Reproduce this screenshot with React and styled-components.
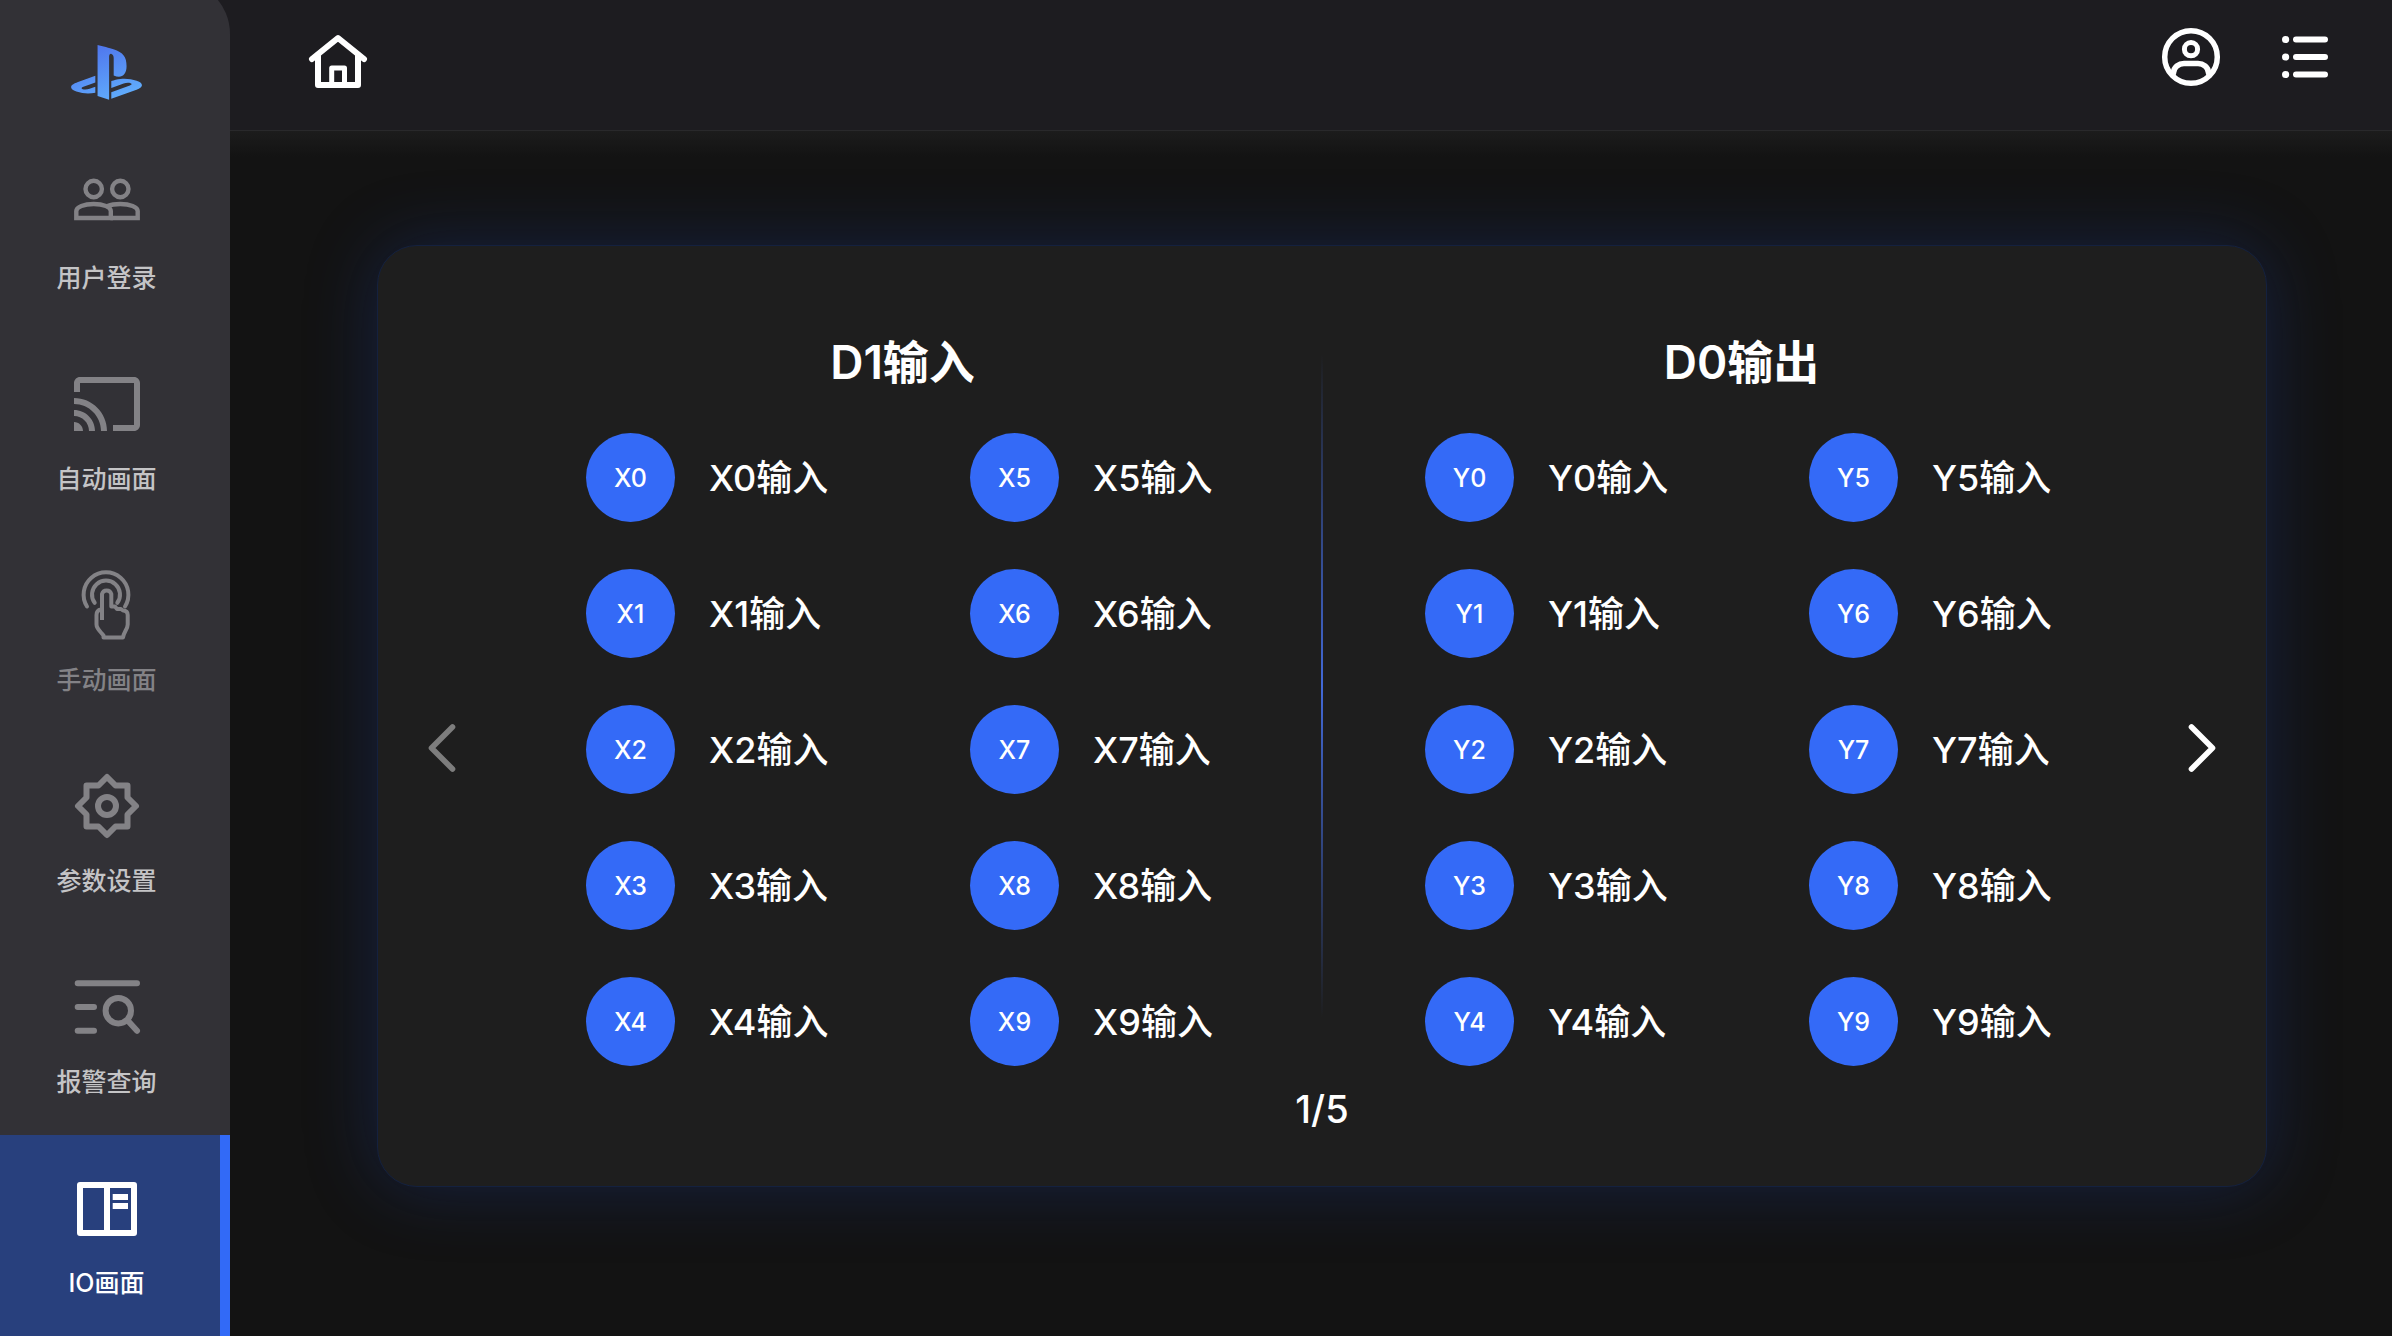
import React, { useState } from "react";
import styled, { createGlobalStyle } from "styled-components";

const GlobalStyle = createGlobalStyle`
  * {
    box-sizing: border-box;
  }

  body {
    margin: 0;
    background: #131313;
    color: #ffffff;
    font-family: Inter, "Noto Sans CJK SC", sans-serif;
    font-weight: 500;
  }

  button {
    padding: 0;
    border: none;
    background: none;
    color: inherit;
    font: inherit;
    cursor: pointer;
  }
`;

const Page = styled.div`
  display: flex;
  min-height: 100vh;
  background: #1d1c20;
  overflow: hidden;
`;

const Sidebar = styled.nav`
  display: flex;
  flex-direction: column;
  flex-shrink: 0;
  width: 230px;
  margin-top: -20px;
  padding-top: 20px;
  border-top-right-radius: 54px;
  background: #323136;
  z-index: 1;
`;

const LogoLink = styled.a`
  display: flex;
  justify-content: center;
  height: 130px;
  padding: 41px 18px 0 0;
`;

const NavItem = styled.a`
  display: flex;
  flex: 1;
  flex-direction: column;
  align-items: center;
  gap: 21px;
  min-height: 180px;
  padding: 37px ${(props) => (props.$active ? 7 : 17)}px 0 0;
  border-right: ${(props) => (props.$active ? "10px solid #326af7" : "none")};
  background: ${(props) => (props.$active ? "#28407d" : "transparent")};
  color: ${(props) => (props.$active ? "#ffffff" : "#838286")};
  text-decoration: none;
`;

const NavLabel = styled.span`
  font-size: 25px;
  line-height: 36px;
  color: ${(props) =>
    props.$active ? "#ffffff" : props.$dim ? "#838286" : "#c4c4c6"};
`;

const Content = styled.div`
  display: flex;
  flex: 1;
  flex-direction: column;
  min-width: 0;
`;

const Header = styled.header`
  display: flex;
  align-items: flex-start;
  gap: 50px;
  height: 131px;
  padding: 25px 55px 0 76px;
  border-bottom: 1px solid #29292b;
  background: #1d1c20;
`;

const IconButton = styled.button`
  display: flex;
  margin-right: ${(props) => (props.$first ? "auto" : 0)};
`;

const Main = styled.main`
  display: flex;
  flex: 1;
  flex-direction: column;
  padding: 114px 125px 149px 147px;
  background: linear-gradient(#1c1c1c, #131313 26px);
`;

const Card = styled.section`
  display: flex;
  flex: 1;
  flex-direction: column;
  align-items: center;
  padding: 88px 22px 54px;
  border: 1px solid #14213f;
  border-radius: 40px;
  background: #1e1e1e;
  box-shadow: 0 0 72px rgba(28, 62, 160, 0.32);
`;

const Board = styled.div`
  display: flex;
  width: 100%;
`;

const ArrowButton = styled.button`
  display: flex;
  align-items: center;
  justify-content: center;
  width: 84px;
  margin-top: 96px;
  color: #ffffff;

  &:disabled {
    color: #7d7d7d;
    cursor: default;
  }
`;

const Divider = styled.div`
  width: 2px;
  margin: 20px 0 48px;
  background: linear-gradient(transparent, #4269d8, transparent);
`;

const GroupContainer = styled.section`
  display: flex;
  flex: 1;
  flex-direction: column;
  align-items: center;
  gap: 43px;
`;

const GroupHeading = styled.h2`
  margin: 0;
  font-size: 46px;
  font-weight: 600;
  line-height: 56px;
`;

const Points = styled.ul`
  display: grid;
  grid-auto-flow: column;
  grid-template-rows: repeat(5, 89px);
  grid-auto-columns: 249px;
  gap: 47px 135px;
  margin: 0;
  padding: 0;
  list-style: none;
`;

const Point = styled.li`
  display: flex;
  align-items: center;
  gap: 34px;
  font-size: 36px;
  line-height: 44px;
  white-space: nowrap;
`;

const Badge = styled.span`
  display: flex;
  align-items: center;
  justify-content: center;
  width: 89px;
  height: 89px;
  border-radius: 50%;
  background: #346af7;
  font-size: 25px;
`;

const Pager = styled.div`
  margin-top: 21px;
  font-size: 38px;
  line-height: 44px;
`;

const Logo = () => (
  <svg width="71" height="63" viewBox="0 0 576 512" fill="url(#logoFill)">
    <defs>
      <linearGradient id="logoFill" x1="0" y1="0" x2="0.5" y2="1">
        <stop offset="0.2" stopColor="#5078ee" />
        <stop offset="1" stopColor="#5fa9fb" />
      </linearGradient>
    </defs>
    <path d="M570.9 372.3c-11.3 14.2-38.8 24.3-38.8 24.3L327 470.2v-54.3l150.9-53.8c17.1-6.1 19.8-14.8 5.8-19.4-13.9-4.6-39.1-3.3-56.2 2.9L327 381.1v-56.4c23.2-7.8 47.1-13.6 75.7-16.8 40.9-4.5 90.9.6 130.2 15.5 44.2 14 49.2 34.7 38 48.9zm-224.4-92.5v-139c0-16.3-3-31.3-18.3-35.6-11.7-3.8-19 7.1-19 23.4v347.9l-93.8-29.8V32c39.9 7.4 98 24.9 129.2 35.4C424.1 94.7 451 128.7 451 205.2c0 74.5-46 102.8-104.5 74.6zM43.2 410.2c-45.4-12.8-53-39.5-32.3-54.8 19.1-14.2 51.7-24.9 51.7-24.9l134.5-47.8v54.5l-96.8 34.6c-17.1 6.1-19.7 14.8-5.8 19.4 13.9 4.6 39.1 3.3 56.2-2.9l46.4-16.9v48.8c-51.6 9.3-101.4 7.3-153.9-10z" />
  </svg>
);

const Icon = ({ size = 72, strokeWidth = 6, children }) => (
  <svg
    width={size}
    height={size}
    viewBox={`0 0 ${size} ${size}`}
    fill="none"
    stroke="currentColor"
    strokeWidth={strokeWidth}
    strokeLinecap="round"
    strokeLinejoin="round"
    aria-hidden="true"
  >
    {children}
  </svg>
);

const UsersIcon = () => (
  <Icon strokeWidth={4.4}>
    <g strokeLinejoin="miter">
      <circle cx="22.7" cy="22" r="8.2" />
      <circle cx="49.3" cy="22" r="8.2" />
      <path d="M5.3 51V44C5.3 40 13 37 22.7 37S39.8 40 39.8 44V51Z" />
      <path d="M36.5 39C40 37.6 45 37 49.3 37C59 37 66.7 40 66.7 44V51H39.8" />
    </g>
  </Icon>
);

const CastIcon = () => (
  <Icon>
    <path
      transform="scale(3)"
      fill="currentColor"
      stroke="none"
      d="M21 3H3c-1.1 0-2 .9-2 2v3h2V5h18v14h-7v2h7c1.1 0 2-.9 2-2V5c0-1.1-.9-2-2-2zM1 18v3h3c0-1.66-1.34-3-3-3zm0-4v2c2.76 0 5 2.24 5 5h2c0-3.87-3.13-7-7-7zm0-4v2c4.97 0 9 4.03 9 9h2c0-6.08-4.93-11-11-11z"
    />
  </Icon>
);

const TouchIcon = () => (
  <Icon strokeWidth={4}>
    <path d="M16 37.5A22.4 22.4 0 1 1 54 37.5" />
    <path d="M23.7 33.8A14 14 0 1 1 46.3 33.8" />
    <path
      strokeLinecap="butt"
      d="M31 51V25A4.8 4.8 0 0 1 40.3 25V37.5L44 37.5L46 40H50L52 41.5C55 41.5 56.7 43 56.7 46V55.5C56.7 60 53 62.5 52 68.5H32.5V66.5C30 63 25.5 60 25.5 55.5V46C25.5 43 27 41 30 40.5"
    />
  </Icon>
);

const SettingIcon = () => (
  <Icon>
    <circle cx="36" cy="36" r="9" />
    <path d="M36 7L44.5 15.5H56.5V27.5L65 36L56.5 44.5V56.5H44.5L36 65L27.5 56.5H15.5V44.5L7 36L15.5 27.5V15.5H27.5Z" />
  </Icon>
);

const QueryIcon = () => (
  <Icon>
    <path d="M6.7 12.3H66M6.7 36H23M6.7 59.7H23" />
    <circle cx="47.3" cy="39.7" r="12.7" />
    <path d="M56.7 49.5L66 59.7" />
  </Icon>
);

const BoardIcon = () => (
  <Icon>
    <path d="M9 13H63V61H9ZM36 13V61" />
    <path strokeLinecap="butt" d="M41.7 25H57M41.7 34H57" />
  </Icon>
);

const HomeIcon = () => (
  <Icon size={64}>
    <path d="M6 34L32 13L58 34" />
    <path d="M12 31V60H52V31" />
    <path strokeWidth="5" d="M25.7 59V43H38.5V59" />
  </Icon>
);

const AccountIcon = () => (
  <Icon size={64} strokeWidth={5.5}>
    <circle cx="32" cy="32" r="26.3" />
    <circle cx="32" cy="24.2" r="6.6" strokeWidth="5" />
    <path d="M14.5 48C14.5 42 20 38.5 25 38.5H39C44 38.5 49.5 42 49.5 48" />
  </Icon>
);

const ListIcon = () => (
  <Icon size={64}>
    <path d="M23 14.5H52M23 32H52M23 49.5H52" />
    <path strokeWidth="7" d="M12.5 14.5H12.7M12.5 32H12.7M12.5 49.5H12.7" />
  </Icon>
);

const ArrowIcon = ({ left }) => (
  <svg
    width="28"
    height="50"
    viewBox="0 0 28 50"
    fill="none"
    stroke="currentColor"
    strokeWidth="5.6"
    strokeLinecap="round"
    strokeLinejoin="round"
    aria-hidden="true"
  >
    <path d={left ? "M24.5 4L3.5 25L24.5 46" : "M3.5 4L24.5 25L3.5 46"} />
  </svg>
);

const navItems = [
  { label: "用户登录", icon: UsersIcon },
  { label: "自动画面", icon: CastIcon },
  { label: "手动画面", icon: TouchIcon, dim: true },
  { label: "参数设置", icon: SettingIcon },
  { label: "报警查询", icon: QueryIcon },
  { label: "IO画面", icon: BoardIcon, active: true },
];

const pointNumbers = [0, 1, 2, 3, 4, 5, 6, 7, 8, 9];
const totalPages = 5;

const Group = ({ title, prefix }) => (
  <GroupContainer>
    <GroupHeading>{title}</GroupHeading>
    <Points>
      {pointNumbers.map((number) => (
        <Point key={number}>
          <Badge>{`${prefix}${number}`}</Badge>
          <span>{`${prefix}${number}输入`}</span>
        </Point>
      ))}
    </Points>
  </GroupContainer>
);

const App = () => {
  const [page, setPage] = useState(1);

  return (
    <Page>
      <GlobalStyle />
      <Sidebar>
        <LogoLink href="#" aria-label="PlayStation">
          <Logo />
        </LogoLink>
        {navItems.map(({ label, icon: NavIcon, dim, active }) => (
          <NavItem key={label} href="#" $active={active}>
            <NavIcon />
            <NavLabel $active={active} $dim={dim}>
              {label}
            </NavLabel>
          </NavItem>
        ))}
      </Sidebar>
      <Content>
        <Header>
          <IconButton $first aria-label="首页">
            <HomeIcon />
          </IconButton>
          <IconButton aria-label="用户">
            <AccountIcon />
          </IconButton>
          <IconButton aria-label="菜单">
            <ListIcon />
          </IconButton>
        </Header>
        <Main>
          <Card>
            <Board>
              <ArrowButton
                aria-label="上一页"
                disabled={page === 1}
                onClick={() => setPage(page - 1)}
              >
                <ArrowIcon left />
              </ArrowButton>
              <Group title="D1输入" prefix="X" />
              <Divider />
              <Group title="D0输出" prefix="Y" />
              <ArrowButton
                aria-label="下一页"
                disabled={page === totalPages}
                onClick={() => setPage(page + 1)}
              >
                <ArrowIcon />
              </ArrowButton>
            </Board>
            <Pager>{`${page}/${totalPages}`}</Pager>
          </Card>
        </Main>
      </Content>
    </Page>
  );
};

export default App;
